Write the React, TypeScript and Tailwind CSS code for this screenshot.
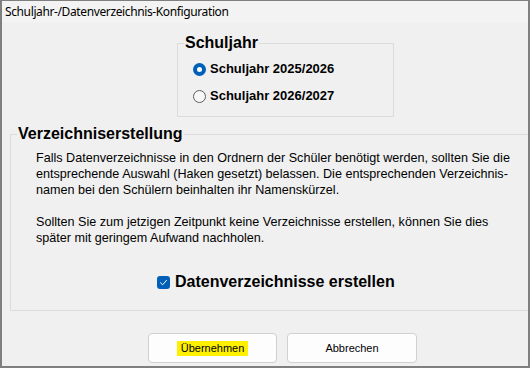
import React from "react";

const arial = { fontFamily: '"Liberation Sans", Arial, sans-serif' };

function Radio({ checked }: { checked: boolean }) {
  return checked ? (
    <span className="flex h-[13px] w-[13px] shrink-0 items-center justify-center rounded-full bg-[#005fb8]">
      <span className="h-[5px] w-[5px] rounded-full bg-white" />
    </span>
  ) : (
    <span className="h-[13px] w-[13px] shrink-0 rounded-full border border-[#5d5d5d] bg-[#f7f7f7]" />
  );
}

export default function App() {
  return (
    <div
      className="flex h-[368px] w-[530px] flex-col overflow-hidden border-x-2 border-b-2 border-t border-[#7f7f7f] bg-[#f0f0f0] text-black"
      style={arial}
    >
      <div
        className="flex h-[22px] shrink-0 items-center bg-[#f3f3f3] pl-[3px] text-[12px] leading-none"
        style={{ fontFamily: '"Noto Sans", "Open Sans", sans-serif' }}
      >
        <span className="tracking-[-0.38px]">Schuljahr-/Datenverzeichnis-Konfiguration</span>
      </div>

      <div className="flex flex-1 flex-col overflow-hidden">
        <fieldset className="ml-[175px] mt-[11px] h-[83px] w-[217px] shrink-0 border border-[#dcdcdc]">
          <legend className="ml-[6px] px-[1px] text-[16px] font-bold leading-[18px]">Schuljahr</legend>
          <div className="mt-[10px] flex flex-col gap-[13px] pl-[15px]">
            <label className="flex h-[14px] items-center gap-[4px] text-[13px] font-bold leading-[14px]">
              <Radio checked />
              <span>Schuljahr 2025/2026</span>
            </label>
            <label className="flex h-[14px] items-center gap-[4px] text-[13px] font-bold leading-[14px]">
              <Radio checked={false} />
              <span>Schuljahr 2026/2027</span>
            </label>
          </div>
        </fieldset>

        <fieldset className="ml-[8px] mt-[8px] h-[186px] w-[540px] shrink-0 border border-[#dcdcdc]">
          <legend className="ml-[6px] px-[1px] text-[16px] font-bold leading-[18px]">Verzeichniserstellung</legend>
          <div className="mt-[7px] pl-[25px] text-[12.6px] leading-[16px]">
            <p>
              Falls Datenverzeichnisse in den Ordnern der Schüler benötigt werden, sollten Sie die
              <br />
              entsprechende Auswahl (Haken gesetzt) belassen. Die entsprechenden Verzeichnis-
              <br />
              namen bei den Schülern beinhalten ihr Namenskürzel.
            </p>
            <p className="mt-[16px]">
              Sollten Sie zum jetzigen Zeitpunkt keine Verzeichnisse erstellen, können Sie dies
              <br />
              später mit geringem Aufwand nachholen.
            </p>
          </div>
          <label className="mt-[27px] flex items-center gap-[5px] pl-[146px] text-[16px] font-bold leading-[18px]">
            <span className="flex h-[13px] w-[13px] shrink-0 items-center justify-center rounded-[3px] bg-[#005fb8]">
              <svg width="9" height="9" viewBox="0 0 9 9" fill="none">
                <path d="M1.5 4.8 L3.6 6.8 L7.5 2.4" stroke="white" strokeWidth="1" strokeLinecap="round" strokeLinejoin="round" />
              </svg>
            </span>
            <span>Datenverzeichnisse erstellen</span>
          </label>
        </fieldset>

        <div className="mt-[22px] flex gap-[10px] pl-[146px]">
          <button className="flex h-[30px] w-[129px] items-center justify-center rounded-[4px] border border-[#d0d0d0] bg-[#fdfdfd] text-[11px]">
            <span className="bg-[#fff000] px-[4px] leading-[15px]">Übernehmen</span>
          </button>
          <button className="flex h-[30px] w-[130px] items-center justify-center rounded-[4px] border border-[#d0d0d0] bg-[#fdfdfd] text-[11px]">
            <span className="leading-[15px]">Abbrechen</span>
          </button>
        </div>
      </div>
    </div>
  );
}
